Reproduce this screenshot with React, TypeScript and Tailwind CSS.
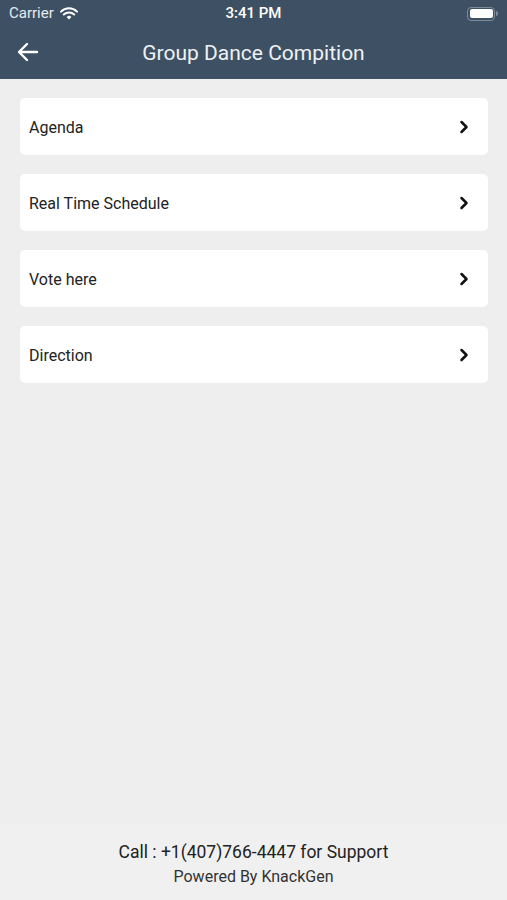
import { ChevronRight } from "lucide-react";

const items = ["Agenda", "Real Time Schedule", "Vote here", "Direction"];

function Wifi() {
  return (
    <svg width="18" height="13" viewBox="0 0 18 13" className="ml-[6px]">
      <path d="M1 4.6a11.5 11.5 0 0 1 16 0" stroke="white" strokeWidth="2" fill="none" strokeLinecap="round" />
      <path d="M3.8 7.5a7.5 7.5 0 0 1 10.4 0" stroke="white" strokeWidth="2" fill="none" strokeLinecap="round" />
      <path d="M9 12.5 6.6 10a3.4 3.4 0 0 1 4.8 0z" fill="white" />
    </svg>
  );
}

export default function App() {
  return (
    <div className="flex h-[900px] w-[507px] flex-col bg-[#eeeeee] font-['Roboto',sans-serif]">
      <header className="h-[79px] shrink-0 bg-[#3e5164] text-white">
        <div className="relative flex h-[27px] items-center px-[9px] text-[15px]">
          <span className="text-[#e6ebef]">Carrier</span>
          <Wifi />
          <span className="absolute left-1/2 -translate-x-1/2 font-medium">3:41 PM</span>
          <div className="ml-auto flex items-center">
            <div className="h-[14px] w-[28px] rounded-[4px] border border-[#7d8b99] p-[1.5px]">
              <div className="h-full w-full rounded-[2px] bg-white" />
            </div>
            <div className="ml-[1px] h-[5px] w-[2px] rounded-r bg-[#7d8b99]" />
          </div>
        </div>
        <div className="relative flex h-[52px] items-center justify-center">
          <svg width="22" height="20" viewBox="0 0 22 20" className="absolute left-[17px] top-[15px]">
            <path d="M20 10H3M10 2 2 10l8 8" stroke="white" strokeWidth="2.4" fill="none" strokeLinecap="round" strokeLinejoin="round" />
          </svg>
          <h1 className="pt-[2px] text-[21px] text-[#eef1f4]">Group Dance Compition</h1>
        </div>
      </header>

      <main className="flex flex-1 flex-col gap-[19px] px-[20px] pt-[19px]">
        {items.map((item) => (
          <div
            key={item}
            className="flex h-[57px] w-[468px] items-center justify-between rounded-[5px] bg-white pl-[9px] pr-[14px]"
          >
            <span className="pt-[2px] text-[16px] text-[#222222]">{item}</span>
            <ChevronRight size={20} strokeWidth={3} className="text-[#111111]" />
          </div>
        ))}
      </main>

      <footer className="flex h-[76px] shrink-0 flex-col items-center bg-[#f0f0f0] pt-[18px] text-[#222222]">
        <p className="text-[17.5px] leading-[20px]">Call : +1(407)766-4447 for Support</p>
        <p className="mt-[6px] text-[16px] leading-[18px] text-[#333333]">Powered By KnackGen</p>
      </footer>
    </div>
  );
}
